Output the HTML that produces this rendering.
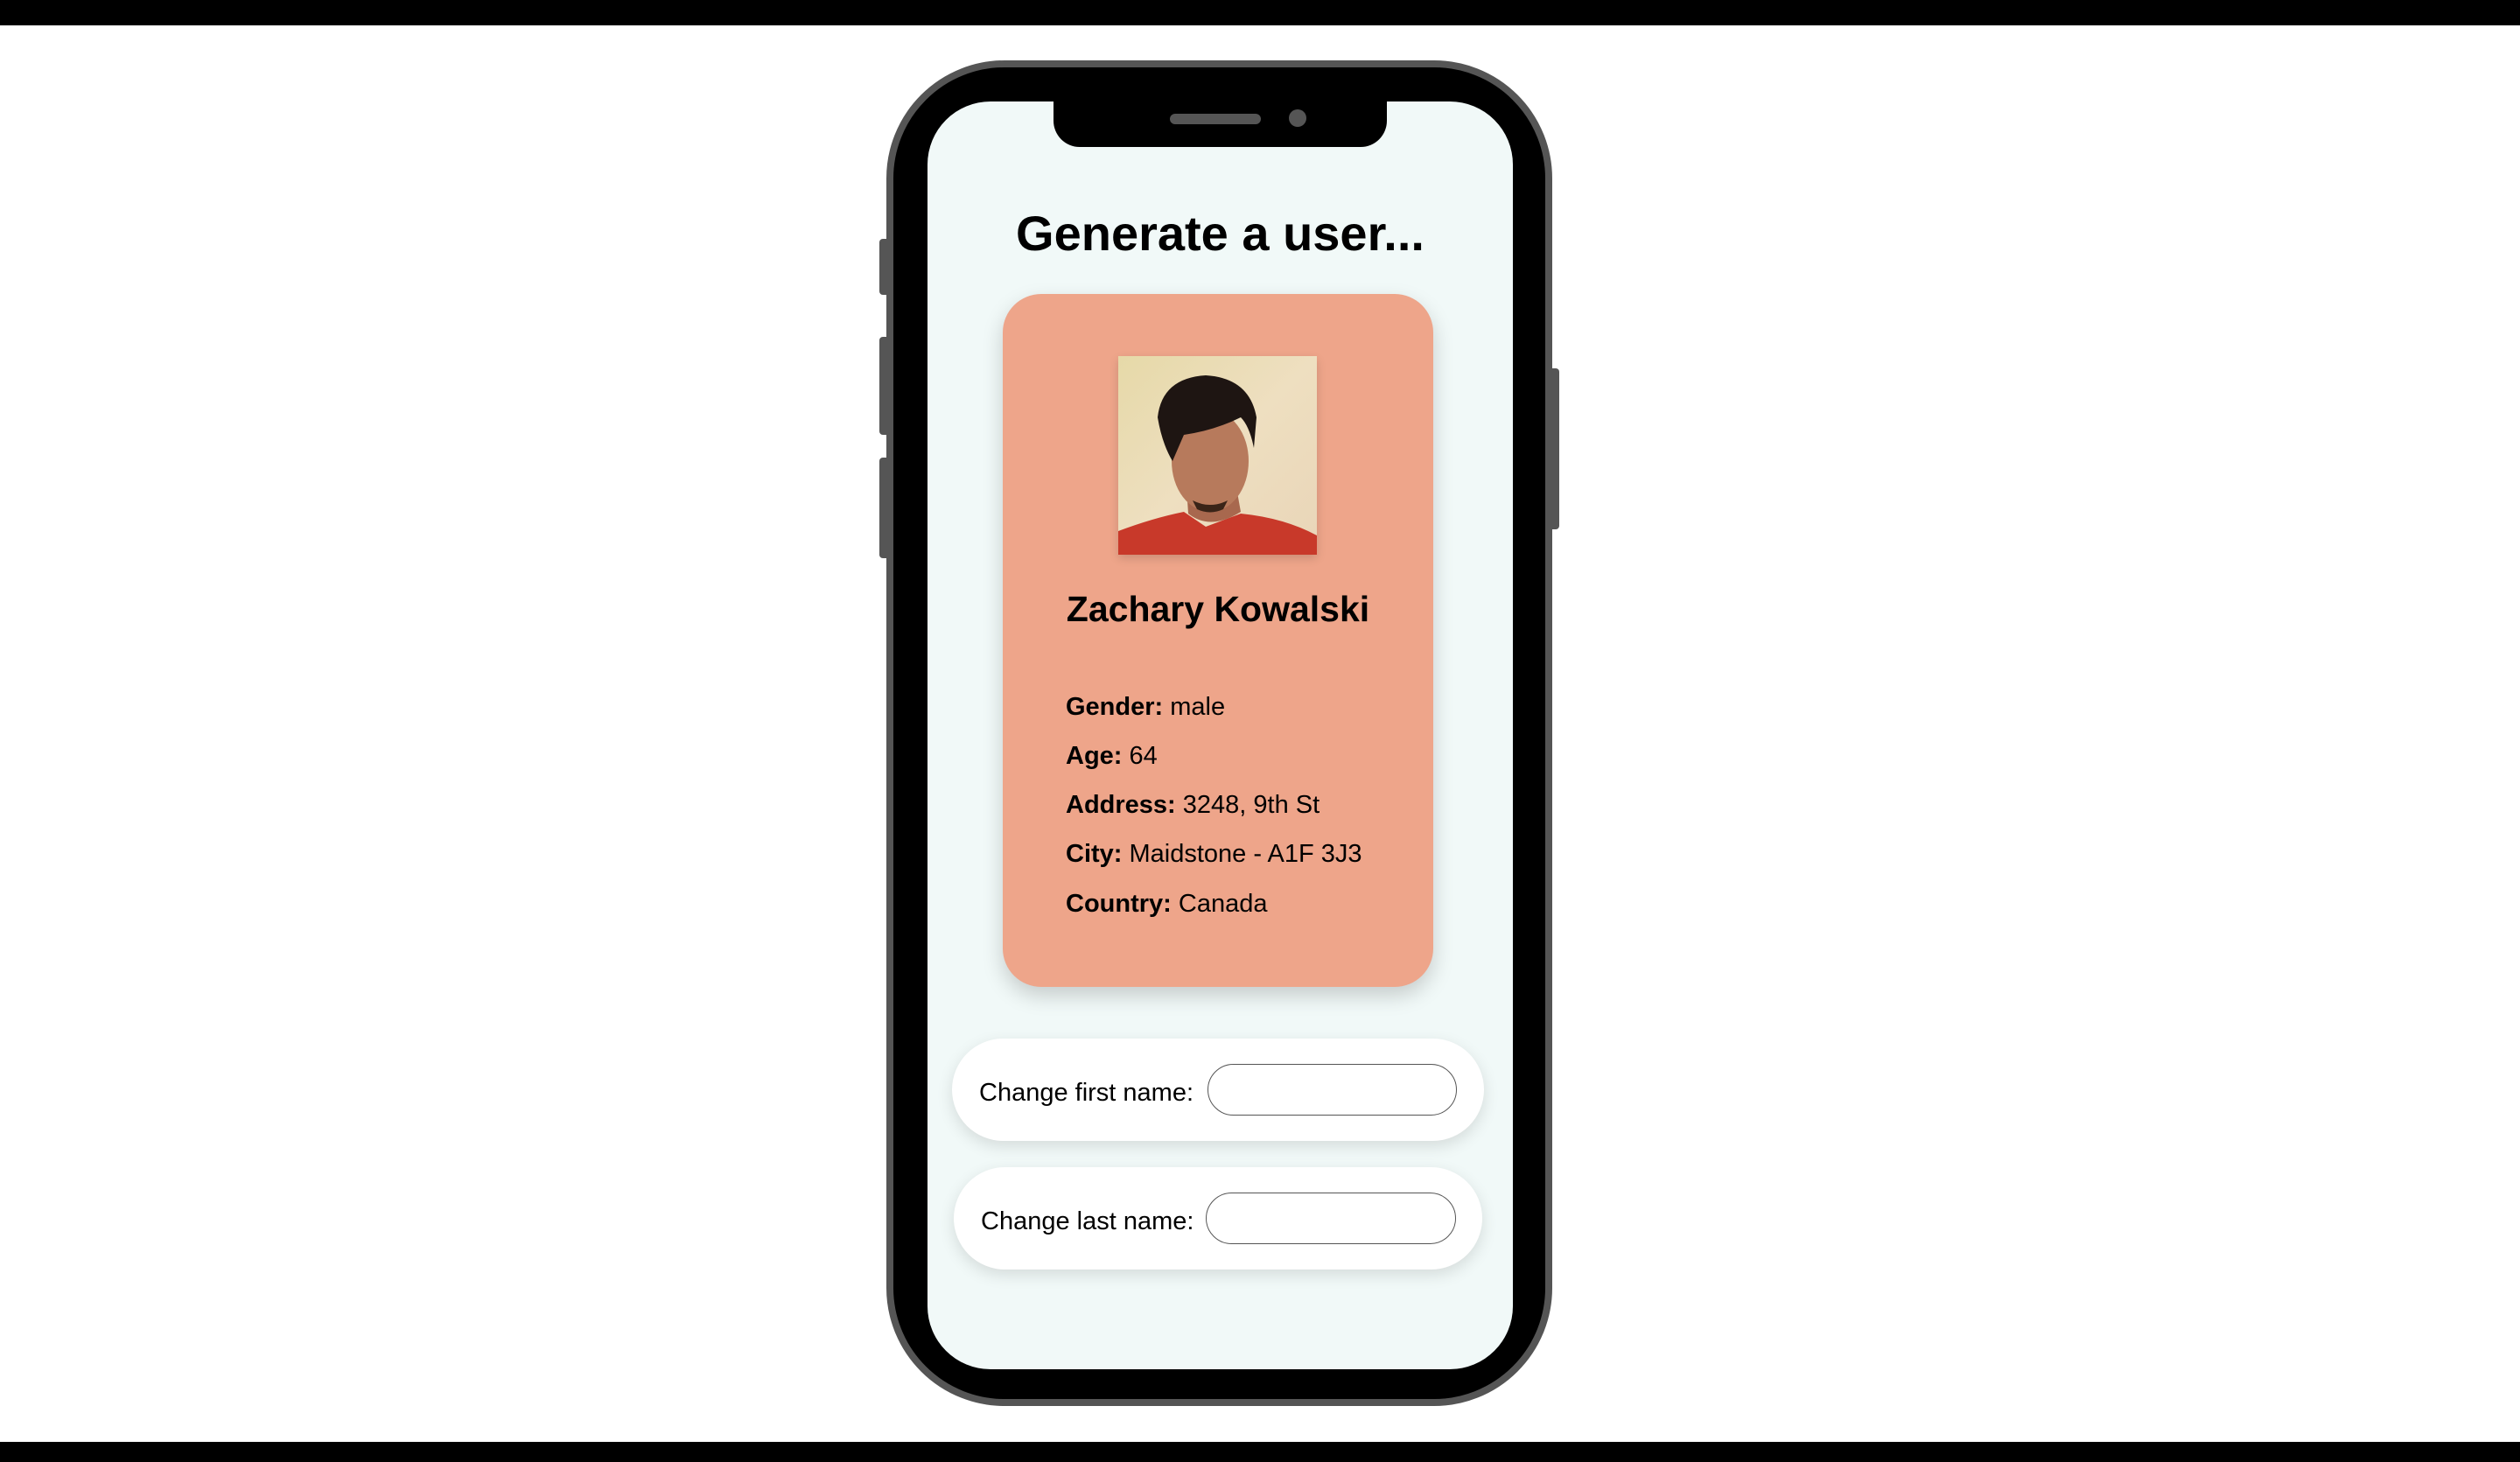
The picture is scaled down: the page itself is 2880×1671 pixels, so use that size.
<!DOCTYPE html>
<html><head><meta charset="utf-8"><style>
*{margin:0;padding:0;box-sizing:border-box}
body{width:2880px;height:1671px;background:#fff;position:relative;overflow:hidden;font-family:"Liberation Sans",sans-serif;color:#000}
.bar{position:absolute;left:0;width:2880px;background:#000}
.abs{position:absolute}
.btn{position:absolute;background:#555;border-radius:4px}
.phone{position:absolute;left:1013px;top:69px;width:761px;height:1538px;background:#000;border:8px solid #555;border-radius:135px}
.screen{position:absolute;left:1060px;top:116px;width:669px;height:1449px;background:#F1F9F8;border-radius:72px;overflow:hidden}
.notch{position:absolute;left:1204px;top:100px;width:381px;height:68px;background:#000;border-radius:0 0 30px 30px}
.card{position:absolute;left:1146px;top:336px;width:492px;height:792px;background:#EEA58A;border-radius:44px;box-shadow:0 10px 24px rgba(0,0,0,.18)}
.row{position:absolute;background:#fff;border-radius:60px;box-shadow:0 6px 18px rgba(0,0,0,.12)}
.lbl{position:absolute;font-size:29px;white-space:nowrap;line-height:1}
.inp{position:absolute;background:#fff;border:1.5px solid #555;border-radius:30px;height:59px}
.d{position:absolute;left:1218px;font-size:29px;white-space:nowrap;line-height:1}
</style></head><body>
<div class="bar" style="top:0;height:29px"></div>
<div class="bar" style="top:1648px;height:23px"></div>
<div class="btn" style="left:1005px;top:273px;width:12px;height:64px"></div>
<div class="btn" style="left:1005px;top:385px;width:12px;height:112px"></div>
<div class="btn" style="left:1005px;top:523px;width:12px;height:115px"></div>
<div class="btn" style="left:1770px;top:421px;width:12px;height:184px"></div>
<div class="phone"></div>
<div class="screen"></div>
<div class="notch"></div>
<div class="abs" style="left:1337px;top:130px;width:104px;height:12px;background:#555;border-radius:6px"></div>
<div class="abs" style="left:1473px;top:125px;width:20px;height:20px;background:#555;border-radius:50%"></div>
<div class="abs" style="left:1060px;width:669px;top:239px;text-align:center;font-size:56px;font-weight:bold;line-height:1">Generate a user...</div>
<div class="card"></div>
<svg class="abs" style="left:1278px;top:407px;box-shadow:0 4px 10px rgba(0,0,0,.15)" width="227" height="227" viewBox="0 0 227 227">
<defs><linearGradient id="bg" x1="0" y1="0" x2="1" y2="1"><stop offset="0" stop-color="#E6D9A8"/><stop offset=".5" stop-color="#EEDFC0"/><stop offset="1" stop-color="#E9D5B8"/></linearGradient></defs>
<rect width="227" height="227" fill="url(#bg)"/>
<path d="M0 200 Q40 185 75 178 L100 195 L140 180 Q190 185 227 205 L227 227 L0 227Z" fill="#C8392A"/>
<path d="M78 150 L80 180 Q105 200 140 178 L135 150Z" fill="#A8684E"/>
<ellipse cx="105" cy="120" rx="44" ry="58" fill="#B77A5C"/>
<path d="M45 70 Q50 25 100 22 Q150 25 158 70 L155 105 Q150 80 140 70 Q110 85 75 90 L62 120 Q50 100 45 70Z" fill="#1E1512"/>
<path d="M85 165 Q105 175 125 165 L120 175 Q105 182 90 175Z" fill="#3A2418"/>
</svg>
<div class="abs" style="left:1146px;width:492px;top:676px;text-align:center;font-size:41px;font-weight:bold;line-height:1">Zachary Kowalski</div>
<div class="d" style="top:794px"><b>Gender:</b> male</div>
<div class="d" style="top:850px"><b>Age:</b> 64</div>
<div class="d" style="top:906px"><b>Address:</b> 3248, 9th St</div>
<div class="d" style="top:962px"><b>City:</b> Maidstone - A1F 3J3</div>
<div class="d" style="top:1019px"><b>Country:</b> Canada</div>
<div class="row" style="left:1088px;top:1187px;width:608px;height:117px"></div>
<div class="lbl" style="left:1119px;top:1235px">Change first name:</div>
<div class="inp" style="left:1380px;top:1216px;width:285px"></div>
<div class="row" style="left:1090px;top:1334px;width:604px;height:117px"></div>
<div class="lbl" style="left:1121px;top:1382px">Change last name:</div>
<div class="inp" style="left:1378px;top:1363px;width:286px"></div>
</body></html>
